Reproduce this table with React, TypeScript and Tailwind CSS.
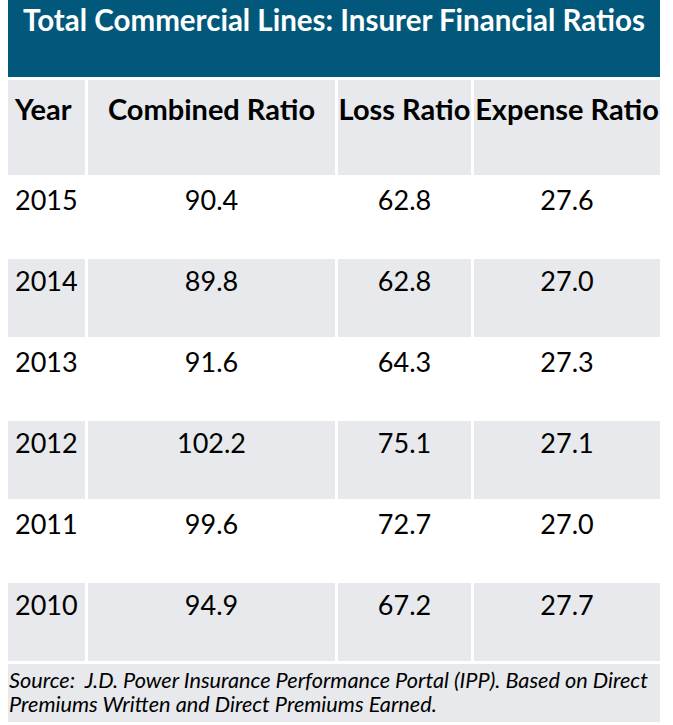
import React from "react";

const rows = [
  { year: "2015", combined: "90.4", loss: "62.8", expense: "27.6", shaded: false },
  { year: "2014", combined: "89.8", loss: "62.8", expense: "27.0", shaded: true },
  { year: "2013", combined: "91.6", loss: "64.3", expense: "27.3", shaded: false },
  { year: "2012", combined: "102.2", loss: "75.1", expense: "27.1", shaded: true },
  { year: "2011", combined: "99.6", loss: "72.7", expense: "27.0", shaded: false },
  { year: "2010", combined: "94.9", loss: "67.2", expense: "27.7", shaded: true },
];

const grid = "grid grid-cols-[77px_247px_133px_186px] gap-x-[3px]";

export default function App() {
  return (
    <div className="w-[673px] h-[725px] bg-white pl-[8px] text-black font-['Lato','Liberation_Sans',sans-serif]">
      <div className="w-[652px] h-[77px] bg-[#02587a] text-white text-[29.5px] font-bold text-center pt-[2px] leading-[36px]">
        Total Commercial Lines: Insurer Financial Ratios
      </div>

      <div className={`${grid} mt-[3px] h-[95px] text-[29px] font-bold leading-[34px]`}>
        <div className="bg-[#e7e9ec] pl-[7px] pt-[12px]">Year</div>
        <div className="bg-[#e7e9ec] text-center pt-[12px]">Combined Ratio</div>
        <div className="bg-[#e7e9ec] text-center pt-[12px] whitespace-nowrap">Loss Ratio</div>
        <div className="bg-[#e7e9ec] text-center pt-[12px] whitespace-nowrap">Expense Ratio</div>
      </div>

      {rows.map((r) => (
        <div
          key={r.year}
          className={`${grid} mt-[3px] h-[78px] text-[27px] leading-[32px]`}
        >
          <div className={`${r.shaded ? "bg-[#e7e9ec]" : ""} pl-[7px] pt-[6px]`}>{r.year}</div>
          <div className={`${r.shaded ? "bg-[#e7e9ec]" : ""} text-center pt-[6px]`}>{r.combined}</div>
          <div className={`${r.shaded ? "bg-[#e7e9ec]" : ""} text-center pt-[6px]`}>{r.loss}</div>
          <div className={`${r.shaded ? "bg-[#e7e9ec]" : ""} text-center pt-[6px]`}>{r.expense}</div>
        </div>
      ))}

      <div className="w-[652px] mt-[3px] h-[58px] bg-[#e7e9ec] italic text-[21.7px] leading-[24px] pt-[4px] pl-[1px]">
        Source:&nbsp; J.D. Power Insurance Performance Portal (IPP). Based on Direct Premiums Written and Direct Premiums Earned.
      </div>
    </div>
  );
}
